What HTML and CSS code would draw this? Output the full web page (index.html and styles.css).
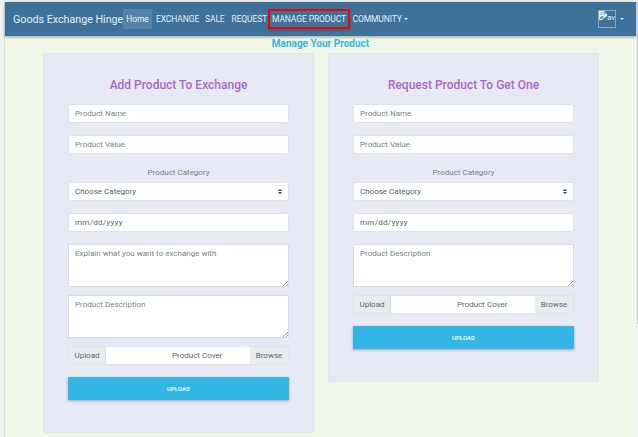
FILE: index.html
```html
<!DOCTYPE html>
<html lang="en">
<head>
<meta charset="utf-8">
<title>Goods Exchange Hinge</title>
<link rel="stylesheet" href="styles.css">
</head>
<body>
<div class="page">
  <nav class="navbar">
    <span class="brand">Goods Exchange Hinge</span>
    <a class="link active">Home</a>
    <a class="link exchange">EXCHANGE</a>
    <a class="link sale">SALE</a>
    <a class="link request">REQUEST</a>
    <a class="link marked">MANAGE PRODUCT</a>
    <a class="link community">COMMUNITY</a>
    <i class="caret"></i>
    <span class="avatar">
      <svg width="8" height="9" viewBox="0 0 8 9"><path d="M0 0h5l3 3v2L3 9H0z" fill="#e9eef5"/><path d="M1 1h4v3H1z" fill="#b9cdec"/><path d="M0 8l3-3 2 1-2 2z" fill="#4fa63c"/><path d="M5 0v3h3z" fill="#8f9ba8"/></svg>
      <span class="alt">av</span>
    </span>
    <i class="caret caret-user"></i>
  </nav>
  <h1 class="heading">Manage Your Product</h1>
  <main class="cards">
    <section class="card">
      <h2 class="title">Add Product To Exchange</h2>
      <div class="field">Product Name</div>
      <div class="field">Product Value</div>
      <div class="label">Product Category</div>
      <div class="field dark select">Choose Category
        <svg width="4" height="5" viewBox="0 0 4 5"><path d="M2 0l2 2H0zM2 5L0 3h4z" fill="#343a40"/></svg>
      </div>
      <div class="field dark date">mm/dd/yyyy</div>
      <div class="area">Explain what you want to exchange with
        <svg class="grip" width="5" height="5" viewBox="0 0 5 5"><path d="M0 5L5 0M3 5l2-2" stroke="#777" stroke-width=".7"/></svg>
      </div>
      <div class="area">Product Description
        <svg class="grip" width="5" height="5" viewBox="0 0 5 5"><path d="M0 5L5 0M3 5l2-2" stroke="#777" stroke-width=".7"/></svg>
      </div>
      <div class="file"><span class="prepend">Upload</span><span class="cover">Product Cover</span><span class="browse">Browse</span></div>
      <div class="button">UPLOAD</div>
    </section>
    <section class="card">
      <h2 class="title">Request Product To Get One</h2>
      <div class="field">Product Name</div>
      <div class="field">Product Value</div>
      <div class="label">Product Category</div>
      <div class="field dark select">Choose Category
        <svg width="4" height="5" viewBox="0 0 4 5"><path d="M2 0l2 2H0zM2 5L0 3h4z" fill="#343a40"/></svg>
      </div>
      <div class="field dark date">mm/dd/yyyy</div>
      <div class="area">Product Description
        <svg class="grip" width="5" height="5" viewBox="0 0 5 5"><path d="M0 5L5 0M3 5l2-2" stroke="#777" stroke-width=".7"/></svg>
      </div>
      <div class="file"><span class="prepend">Upload</span><span class="cover">Product Cover</span><span class="browse">Browse</span></div>
      <div class="button">UPLOAD</div>
    </section>
  </main>
</div>
<div class="scrollbar"></div>
</body>
</html>
```
FILE: styles.css
```css
* { box-sizing: border-box; }
body {
  margin: 0;
  height: 437px;
  overflow: hidden;
  display: flex;
  padding: 2px 0 0 4px;
  background: #f2f2f2;
  font-family: Roboto, sans-serif;
  font-size: 8px;
}
.page {
  width: 632px;
  height: 435px;
  border-left: 1px solid #dcdcdc;
  background: #f0f6e8;
}
.scrollbar { width: 1px; height: 322px; margin-left: 1px; background: #c9c9cc; }
.navbar {
  display: flex;
  align-items: center;
  height: 33.5px;
  padding-left: 8px;
  background: #3f729b;
  color: #e6edf3;
  box-shadow: 0 1px 3px rgba(0, 0, 0, .35);
  white-space: nowrap;
}
.brand { width: 110px; font-size: 10.7px; padding-top: 1px; }
.link { display: block; font-size: 8.5px; letter-spacing: -.1px; line-height: 20px; }
.active { width: 29px; text-align: center; background: #5483a7; }
.exchange { margin-left: 4px; width: 49px; }
.sale { width: 26.5px; }
.request { width: 36.5px; }
.marked {
  width: 82px;
  border: 2px solid #f50000;
  line-height: 16px;
  text-align: center;
  box-shadow: 1px 2px 3px rgba(90, 60, 80, .4);
}
.community { margin-left: 2.5px; width: 51.5px; }
.caret {
  width: 0;
  border: 2px solid transparent;
  border-top-color: #e6edf3;
  border-bottom: 0;
}
.avatar {
  display: flex;
  align-items: flex-start;
  width: 18px;
  height: 18px;
  margin-left: auto;
  border: 1px solid #8ea9bd;
}
.avatar svg { flex: none; }
.alt { width: 8px; overflow: hidden; font-size: 8px; line-height: 13px; }
.caret-user { margin: 0 12px 0 4px; }
.heading {
  margin: 1.5px 0 0;
  font-size: 10px;
  line-height: 14px;
  font-weight: 700;
  color: #33b5e5;
  text-align: center;
}
.cards { display: flex; align-items: flex-start; gap: 14px; padding: 2px 0 0 38px; }
.card {
  width: 271px;
  padding: 22px 24px 32px;
  background: #e7e9f5;
  border: 1px solid #e1e4e9;
  border-radius: 2px;
}
.title {
  margin: 0 0 9px;
  font-size: 12px;
  line-height: 19px;
  font-weight: 500;
  color: #aa66cc;
  text-align: center;
}
.field {
  height: 19px;
  margin-bottom: 12px;
  padding: 0 6px;
  border: 1px solid #dfe2eb;
  border-radius: 2px;
  background: #fff;
  color: #7b828a;
  line-height: 18px;
  white-space: nowrap;
}
.dark { color: #5a6168; }
.label { height: 16px; line-height: 14px; text-align: center; color: #7b8088; }
.select { display: flex; align-items: center; justify-content: space-between; }
.date { letter-spacing: .3px; }
.area {
  position: relative;
  height: 43px;
  margin-bottom: 8px;
  padding: 3px 6px;
  border: 1px solid #d8dce5;
  background: #fff;
  color: #7b828a;
  line-height: 12px;
}
.grip { position: absolute; right: 0; bottom: 0; }
.file {
  display: flex;
  height: 19px;
  border: 1px solid #dfe3ea;
  border-radius: 2px;
  background: #fff;
  color: #5f666e;
  line-height: 18px;
}
.prepend { width: 37px; text-align: center; background: #e9ecef; border-right: 1px solid #d9dde2; }
.cover { width: 144px; padding-left: 66px; }
.browse { flex: 1; text-align: center; background: #e9ecef; }
.button {
  height: 23px;
  margin-top: 12px;
  border-radius: 1px;
  background: #33b5e5;
  color: #fff;
  font-size: 6px;
  font-weight: 500;
  line-height: 23px;
  text-align: center;
  box-shadow: 0 1px 3px rgba(0, 0, 0, .3);
}
```
